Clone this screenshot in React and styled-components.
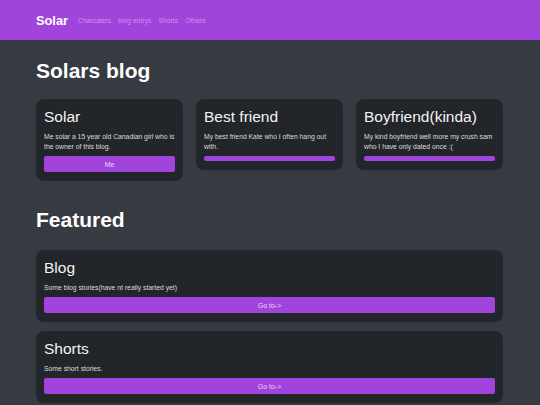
import React from "react";
import styled, { createGlobalStyle } from "styled-components";

const GlobalStyle = createGlobalStyle`
  html, body {
    margin: 0;
    padding: 0;
    background: #363a41;
    font-family: "Liberation Sans", Arial, sans-serif;
    color: #f1f1f1;
  }
`;

const Nav = styled.nav`
  height: 40px;
  background: #a044dc;
  display: flex;
  align-items: center;
  padding-left: 36px;
  gap: 10px;
`;

const Brand = styled.a`
  color: #fff;
  font-size: 12.8px;
  font-weight: bold;
  text-decoration: none;
`;

const NavLinks = styled.div`
  display: flex;
  gap: 7px;
  padding-top: 1px;
`;

const NavLink = styled.a`
  color: #cd93ea;
  font-size: 6.8px;
  text-decoration: none;
`;

const Main = styled.main`
  width: 467px;
  margin-left: 36px;
  padding-top: 17px;
`;

const Heading = styled.h1`
  font-size: 21px;
  font-weight: bold;
  margin: 0 0 ${(p) => p.$gap || 14}px;
  line-height: 28px;
  color: #fff;
`;

const Row = styled.div`
  display: grid;
  grid-template-columns: 147px 147px 147px;
  justify-content: space-between;
  align-items: start;
  margin-bottom: 25px;
`;

const Stack = styled.div`
  display: flex;
  flex-direction: column;
  gap: 9px;
`;

const Card = styled.div`
  background: #222529;
  border-radius: 8px;
  padding: 9px 8px 9px;
  display: flex;
  flex-direction: column;
`;

const CardTitle = styled.h2`
  font-size: 15.5px;
  font-weight: normal;
  margin: 0 0 5.5px;
  line-height: 18px;
  color: #f4f4f4;
`;

const CardText = styled.p`
  font-size: 6.8px;
  line-height: 10px;
  margin: 0 0 3.5px;
  color: #dcdcdc;
`;

const Button = styled.button`
  background: #a044dc;
  border: none;
  border-radius: 2px;
  color: #ecd6fa;
  font-family: inherit;
  font-size: 7px;
  padding: 0;
  height: ${(p) => (p.$empty ? "5px" : "16px")};
  width: 100%;
  margin-top: 1px;
`;

const people = [
  { title: "Solar", text: "Me solar a 15 year old Canadian girl who is the owner of this blog.", btn: "Me" },
  { title: "Best friend", text: "My best friend Kate who I often hang out with.", btn: "" },
  { title: "Boyfriend(kinda)", text: "My kind boyfriend well more my crush sam who I have only dated once :(", btn: "" },
];

const featured = [
  { title: "Blog", text: "Some blog stories(have nt really started yet)" },
  { title: "Shorts", text: "Some short stories." },
];

export default function App() {
  return (
    <>
      <GlobalStyle />
      <Nav>
        <Brand href="#">Solar</Brand>
        <NavLinks>
          <NavLink href="#">Charcaters</NavLink>
          <NavLink href="#">blog entrys</NavLink>
          <NavLink href="#">Shorts</NavLink>
          <NavLink href="#">Others</NavLink>
        </NavLinks>
      </Nav>
      <Main>
        <Heading>Solars blog</Heading>
        <Row>
          {people.map((p) => (
            <Card key={p.title}>
              <CardTitle>{p.title}</CardTitle>
              <CardText>{p.text}</CardText>
              <Button $empty={!p.btn}>{p.btn}</Button>
            </Card>
          ))}
        </Row>
        <Heading $gap={16}>Featured</Heading>
        <Stack>
          {featured.map((f) => (
            <Card key={f.title}>
              <CardTitle>{f.title}</CardTitle>
              <CardText>{f.text}</CardText>
              <Button>Go to-&gt;</Button>
            </Card>
          ))}
        </Stack>
      </Main>
    </>
  );
}
